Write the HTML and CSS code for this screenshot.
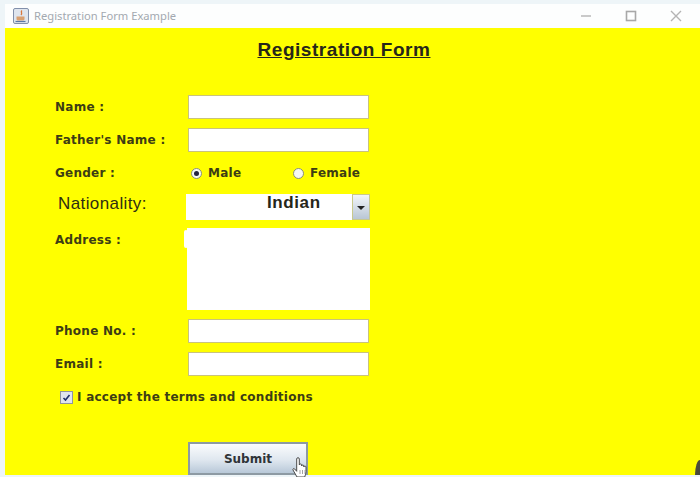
FILE: index.html
```html
<!DOCTYPE html>
<html lang="en">
<head>
  <meta charset="UTF-8" />
  <title>Registration Form Example</title>
  <link rel="stylesheet" href="styles.css">
</head>
<body>

  <div class="titlebar">
    <div class="title-left">
      <svg class="app-icon" width="16" height="16" viewBox="0 0 16 16">
        <rect x="0.5" y="0.5" width="15" height="15" rx="1.5" fill="#dfe5ee" stroke="#8290ab"/>
        <path d="M9 2.5c-2 1.5 1 2.5-1 4.500" fill="none" stroke="#d9763a" stroke-width="1.3"/>
        <path d="M3.5 8.500h8v2.500c0 1-1 1.500-2 1.500h-4c-1 0-2-.5-2-1.500z" fill="#d9a070"/>
        <path d="M2.500 13.500h10" stroke="#5a78a8" stroke-width="1.2"/>
      </svg>
      <span>Registration Form Example</span>
    </div>
    <div class="window-buttons">
      <svg width="12" height="12" viewBox="0 0 12 12"><path d="M1 6h10" stroke="#b4b4b4" stroke-width="1.4"/></svg>
      <svg width="12" height="12" viewBox="0 0 12 12"><rect x="1.500" y="1.500" width="9" height="9" fill="none" stroke="#a8a8a8" stroke-width="1.6"/></svg>
      <svg width="12" height="12" viewBox="0 0 12 12"><path d="M1 1l10 10M11 1L1 11" stroke="#b4b4b4" stroke-width="1.4"/></svg>
    </div>
  </div>

  <div class="panel">
    <h1>Registration Form</h1>

    <div class="form">
      <div class="row">
        <label>Name :</label>
        <input type="text" class="field">
      </div>
      <div class="row">
        <label>Father's Name :</label>
        <input type="text" class="field">
      </div>
      <div class="row">
        <label>Gender :</label>
        <div class="radios">
          <span class="radio-item"><span class="radio checked"></span>Male</span>
          <span class="radio-item"><span class="radio"></span>Female</span>
        </div>
      </div>
      <div class="row row-nation">
        <label class="big-label">Nationality:</label>
        <div class="combo">
          <span class="combo-value">Indian</span>
          <span class="combo-arrow"></span>
        </div>
      </div>
      <div class="row row-address">
        <label>Address :</label>
        <div class="textarea"></div>
      </div>
      <div class="row">
        <label>Phone No. :</label>
        <input type="text" class="field">
      </div>
      <div class="row">
        <label>Email :</label>
        <input type="text" class="field">
      </div>
      <div class="terms">
        <span class="checkbox">
          <svg width="9" height="9" viewBox="0 0 9 9"><path d="M1.500 5l2 2 4-5" fill="none" stroke="#1f2f6b" stroke-width="1.6"/></svg>
        </span>
        <span>I accept the terms and conditions</span>
      </div>
      <div class="submit-wrap">
        <button class="submit">Submit</button>
        <svg class="cursor" width="18" height="21" viewBox="0.5 1 15 21">
          <path d="M5 21l-4-7c-.6-1.200.9-2 1.700-1l2 2.300V3c0-1.800 2.600-1.800 2.600 0v6c0-1.400 2.300-1.400 2.300 0v1c0-1.300 2.200-1.300 2.200 0v1c0-1.200 2.200-1.200 2.200 0v4.500c0 2-.7 3.500-1.300 5.500z" fill="#fff" stroke="#4a4a4a" stroke-width="1"/>
          <path d="M8 14v4M10.500 14v4M13 14v4" stroke="#8a8a8a" stroke-width="0.8"/>
        </svg>
      </div>
    </div>
    <div class="corner"></div>
  </div>

</body>
</html>
```

FILE: styles.css
```css
* { margin: 0; padding: 0; box-sizing: border-box; }

html, body {
  width: 700px;
  height: 477px;
  overflow: hidden;
}

body {
  font-family: "Liberation Sans", Arial, sans-serif;
  background: #eef5f8;
  padding-top: 4px;
}

.titlebar {
  height: 24px;
  margin-left: 5px;
  background: #fdfefe;
  display: flex;
  justify-content: space-between;
  align-items: center;
  padding: 0 18px 1px 8px;
}

.title-left {
  display: flex;
  align-items: center;
  gap: 5px;
  font-family: "Noto Sans", sans-serif;
  font-size: 11.200px;
  color: #a3a9b0;
}

.app-icon { flex: none; }

.window-buttons {
  display: flex;
  gap: 33px;
}

.panel {
  position: relative;
  height: 447px;
  margin-left: 5px;
  background: #ffff00;
}

h1 {
  font-size: 19px;
  font-weight: bold;
  color: #26261a;
  text-align: center;
  text-decoration: underline;
  padding: 12px 17px 0 0;
  line-height: 20px;
  letter-spacing: 0.55px;
}

.form {
  padding: 35px 0 0 51px;
}

.row {
  display: flex;
  align-items: center;
  margin-top: 9px;
}

.row:first-child { margin-top: 0; }

label, .radio-item, .terms {
  font-family: "DejaVu Sans", sans-serif;
  font-size: 12px;
  font-weight: bold;
  color: #3d3d14;
  letter-spacing: 0.25px;
}

label {
  width: 133px;
  margin-left: -1px;
}

.field {
  width: 181px;
  height: 24px;
  background: #fff;
  border: 1px solid #c9c37c;
  outline: none;
}

.radios {
  display: flex;
  height: 24px;
  margin-left: 3px;
}

.radio-item {
  display: flex;
  align-items: center;
  gap: 6px;
  width: 102px;
}

.radio {
  width: 11px;
  height: 11px;
  border-radius: 50%;
  border: 1px solid #8a8f78;
  background: #f6f8f4;
  display: flex;
  align-items: center;
  justify-content: center;
}

.radio.checked::after {
  content: "";
  width: 5px;
  height: 5px;
  border-radius: 50%;
  background: #23233f;
}

.row-nation { height: 26px; }

.big-label {
  font-family: "Liberation Sans", Arial, sans-serif;
  font-size: 17px;
  font-weight: normal;
  letter-spacing: 0.4px;
  color: #2e2e12;
  padding-left: 3px;
  margin-top: -6px;
  width: 131px;
}

.combo {
  width: 184px;
  height: 26px;
  background: #fff;
  display: flex;
  justify-content: space-between;
}

.combo-value {
  font-size: 17px;
  font-weight: bold;
  letter-spacing: 0.6px;
  color: #26261a;
  margin-left: 81px;
  line-height: 18px;
}

.combo-arrow {
  position: relative;
  width: 18px;
  background: linear-gradient(#f2f6fa, #b9c6d4);
  border: 1px solid #c9c98c;
}

.combo-arrow::after {
  content: "";
  position: absolute;
  left: 4px;
  top: 11px;
  border-left: 4px solid transparent;
  border-right: 4px solid transparent;
  border-top: 4px solid #222;
}

.row-address {
  align-items: flex-start;
  margin-top: 8px;
}

.row-address label { margin-top: 5px; width: 132px; }

.textarea {
  position: relative;
  width: 183px;
  height: 82px;
  background: #fff;
}

.textarea::before {
  content: "";
  position: absolute;
  left: -3px;
  top: 2px;
  width: 4px;
  height: 18px;
  border-radius: 2px;
  background: #fff;
}

.terms {
  display: flex;
  align-items: center;
  gap: 4px;
  margin: 14px 0 0 4px;
}

.checkbox {
  width: 13px;
  height: 13px;
  border: 1px solid #8f93a0;
  background: #dfe4ee;
  display: flex;
  align-items: center;
  justify-content: center;
}

.submit-wrap {
  position: relative;
  width: 120px;
  margin: 38px 0 0 132px;
}

.submit {
  display: block;
  width: 120px;
  height: 33px;
  border: 2px solid #8d9aa3;
  background: linear-gradient(#fbfcfd, #dfe7ef 55%, #b8c8d8);
  font-family: "DejaVu Sans", sans-serif;
  font-size: 12px;
  font-weight: bold;
  color: #2f3438;
}

.cursor {
  position: absolute;
  left: 103px;
  top: 15px;
}

.corner {
  position: absolute;
  right: 0;
  bottom: 0;
  width: 5px;
  height: 15px;
  border-top-left-radius: 100%;
  background: #4a4a3c;
}
```
